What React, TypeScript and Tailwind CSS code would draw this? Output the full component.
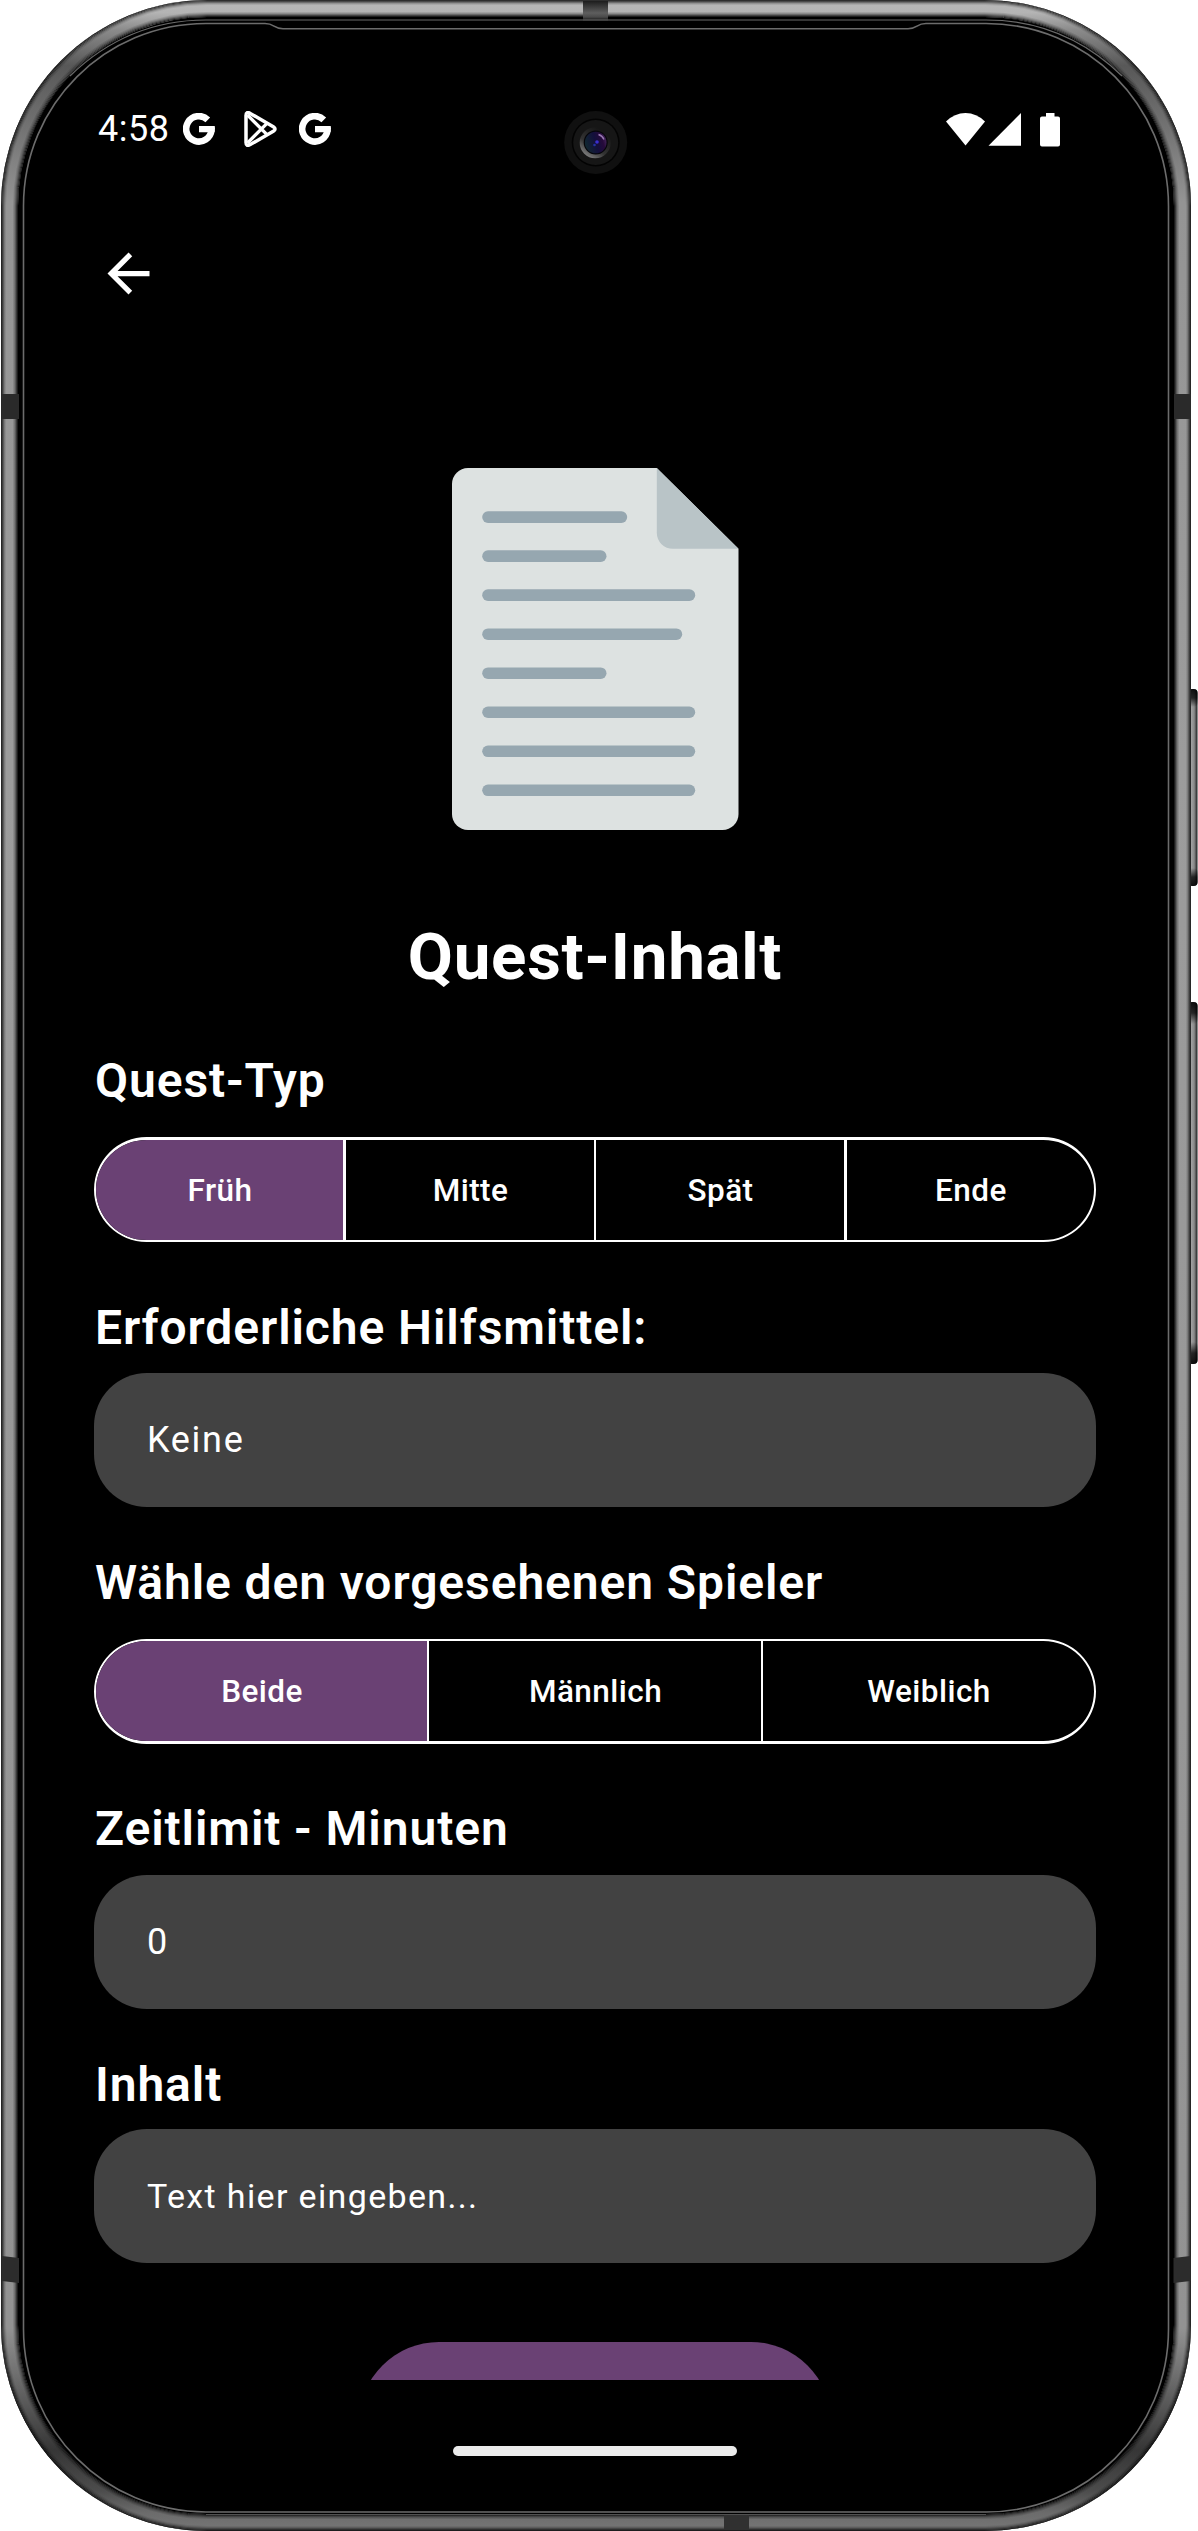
import type { ReactNode } from "react";

/* Concentric edge shading of the metal rim: [inset, width, colour, opacity] */
const RIM: [number, number, string, number][] = [
  [0, 1, "#000", 0.75],
  [1, 1, "#000", 0.6],
  [2, 1, "#000", 0.4],
  [3, 1, "#000", 0.2],
  [4, 1, "#000", 0.08],
  [12, 1, "#000", 0.1],
  [13, 1, "#000", 0.22],
  [14, 1, "#000", 0.4],
  [15, 1, "#000", 0.62],
  [16, 1, "#000", 0.82],
];

function ring(inset: number, width: number) {
  const o = inset + width / 2;
  return { x: 1 + o, y: o, width: 1190 - 2 * o, height: 2531 - 2 * o, rx: 206 - o };
}

function PhoneBody() {
  return (
    <svg className="absolute inset-0 h-full w-full" viewBox="0 0 1198 2531" aria-hidden="true">
      <defs>
        <linearGradient id="metal" gradientUnits="userSpaceOnUse" x1="0" y1="0" x2="0" y2="2531">
          <stop offset="0" stopColor="#b8b8b8" />
          <stop offset="0.005" stopColor="#b4b4b4" />
          <stop offset="0.012" stopColor="#8a8a8a" />
          <stop offset="0.026" stopColor="#585858" />
          <stop offset="0.05" stopColor="#727272" />
          <stop offset="0.08" stopColor="#949494" />
          <stop offset="0.3" stopColor="#9c9c9c" />
          <stop offset="0.92" stopColor="#929292" />
          <stop offset="0.95" stopColor="#585858" />
          <stop offset="0.968" stopColor="#363636" />
          <stop offset="0.984" stopColor="#4c4c4c" />
          <stop offset="0.993" stopColor="#6c6c6c" />
          <stop offset="1" stopColor="#767676" />
        </linearGradient>
        <linearGradient id="side-button" x1="0" y1="0" x2="1" y2="0">
          <stop offset="0" stopColor="#6a6a6a" />
          <stop offset="0.35" stopColor="#a0a0a0" />
          <stop offset="0.65" stopColor="#8a8a8a" />
          <stop offset="1" stopColor="#1c1c1c" />
        </linearGradient>
        <linearGradient id="band-top" x1="0" y1="0" x2="0" y2="1">
          <stop offset="0" stopColor="#1c1c1c" />
          <stop offset="0.6" stopColor="#5e5e5e" />
          <stop offset="0.8" stopColor="#4a4a4a" />
          <stop offset="1" stopColor="#0a0a0a" />
        </linearGradient>
        <linearGradient id="button-ends" x1="0" y1="0" x2="0" y2="1">
          <stop offset="0" stopColor="#000" stopOpacity="0.9" />
          <stop offset="0.5" stopColor="#000" stopOpacity="0.75" />
          <stop offset="1" stopColor="#000" stopOpacity="0" />
        </linearGradient>
      </defs>

      <rect x="1188" y="689" width="9.5" height="197" rx="4" fill="url(#side-button)" />
      <rect x="1188" y="689" width="9.5" height="18" rx="4" fill="url(#button-ends)" />
      <rect x="1188" y="868" width="9.5" height="18" rx="4" fill="url(#button-ends)" transform="rotate(180 1192.75 877)" />
      <rect x="1188" y="1002" width="9.5" height="362" rx="4" fill="url(#side-button)" />
      <rect x="1188" y="1002" width="9.5" height="22" rx="4" fill="url(#button-ends)" />
      <rect x="1188" y="1342" width="9.5" height="22" rx="4" fill="url(#button-ends)" transform="rotate(180 1192.75 1353)" />

      <rect x="1" y="0" width="1190" height="2531" rx="206" fill="#000" />
      <rect {...ring(0, 17)} fill="none" stroke="url(#metal)" strokeWidth="17" />
      {RIM.map(([inset, width, colour, opacity]) => (
        <rect key={inset} {...ring(inset, width)} fill="none" stroke={colour} strokeOpacity={opacity} strokeWidth={width} />
      ))}

      {/* antenna bands */}
      <rect x="583" y="1" width="25" height="20" fill="url(#band-top)" />
      <rect x="724" y="2514" width="25" height="16" fill="#303030" />
      <rect x="2" y="394" width="17" height="25" fill="#2a2a2a" />
      <rect x="1174" y="394" width="17" height="25" fill="#2a2a2a" />
      <path d="M2 2256L19 2258V2283L2 2281Z" fill="#2c2c2c" />
      <path d="M1190.500 2256L1173.500 2258V2283L1190.500 2281Z" fill="#2c2c2c" />

      {/* hairlines along the glass */}
      <path
        d="M70 76C105 42 150 20 206 20H986C1042 20 1087 42 1122 76"
        fill="none"
        stroke="#6a6a6a"
        strokeWidth="1.200"
      />
      <path
        d="M265 23.500H206C105 23.500 23.500 105 23.500 206V2329C23.500 2430 105 2512 206 2512H986C1087 2512 1168.500 2430 1168.500 2329V206C1168.500 105 1087 23.500 986 23.500H926C916 23.500 918 28.700 908 28.700H283C273 28.700 275 23.500 265 23.500Z"
        fill="none"
        stroke="#6c6c6c"
        strokeWidth="1.600"
      />
      <path d="M206 2514.500H986" stroke="#505050" strokeWidth="1" />
    </svg>
  );
}

function Camera() {
  return (
    <svg className="absolute left-[564px] top-[110px] h-[64px] w-[64px]" viewBox="0 0 64 64" aria-hidden="true">
      <defs>
        <linearGradient id="barrel" x1="0.15" y1="0.9" x2="0.7" y2="0.1">
          <stop offset="0" stopColor="#808080" />
          <stop offset="0.4" stopColor="#333333" />
          <stop offset="1" stopColor="#161616" />
        </linearGradient>
        <linearGradient id="glass" x1="0" y1="0.6" x2="1" y2="0.3">
          <stop offset="0" stopColor="#102830" />
          <stop offset="0.5" stopColor="#130f3c" />
          <stop offset="0.8" stopColor="#260a3a" />
          <stop offset="1" stopColor="#4a2860" />
        </linearGradient>
      </defs>
      <circle cx="31.700" cy="32.500" r="31.500" fill="#101010" />
      <circle cx="31.700" cy="32.500" r="24" fill="#030303" />
      <circle cx="31.700" cy="32.500" r="22.500" fill="#161616" />
      <circle cx="31.200" cy="32.800" r="15.500" fill="url(#barrel)" />
      <circle cx="31.700" cy="32.500" r="12" fill="#05050a" />
      <circle cx="31.700" cy="32.500" r="10.800" fill="url(#glass)" />
      <circle cx="33" cy="32" r="1.800" fill="#3a2fd0" />
      <circle cx="30.500" cy="35" r="1.300" fill="#2430a0" />
      <path d="M34.500 24.500a9 9 0 0 1 5.500 5" stroke="#9a7ab4" strokeWidth="1.400" fill="none" />
    </svg>
  );
}

function GoogleIcon() {
  return (
    <svg className="h-8 w-8" viewBox="0 0 32 32" aria-hidden="true">
      <path d="M24.800 6.800A12.700 12.700 0 1 0 28.500 17" fill="none" stroke="#fff" strokeWidth="6.600" />
      <path d="M16 12.900H31.700Q32.300 16 31.500 19.300H16Z" fill="#fff" />
    </svg>
  );
}

function PlayIcon() {
  return (
    <svg className="h-9 w-[33px]" viewBox="0 0 33 36" fill="none" stroke="#fff" aria-hidden="true">
      <path d="M2 4.500V31.500Q2 36 6.200 33.600L29.300 20.300Q32.800 18 29.300 15.700L6.200 2.400Q2 0 2 4.500Z" strokeWidth="3.500" strokeLinejoin="round" />
      <path d="M3.500 4L23.500 24.200M3.500 32L23.500 11.800" strokeWidth="3.300" />
    </svg>
  );
}

function StatusBar() {
  return (
    <div className="flex h-9 items-center justify-between pl-[98px] pr-[130px]">
      <div className="flex items-center">
        <span className="w-[84.500px] text-[36px] leading-[36px] tracking-[0.5px]">4:58</span>
        <GoogleIcon />
        <span className="ml-[29px] mr-[22px] flex">
          <PlayIcon />
        </span>
        <GoogleIcon />
      </div>
      <svg className="h-[36px] w-[114px]" viewBox="0 0 114 36" fill="#fff" aria-hidden="true">
        <path d="M0 10.500Q8.500 2 19.500 2T39 10.500L19.500 34.500Z" />
        <path d="M75 2V34.800H42.500Z" />
        <path d="M100 2h8.500v3.500h3.500a2 2 0 0 1 2 2v26a2 2 0 0 1-2 2h-16a2 2 0 0 1-2-2v-26a2 2 0 0 1 2-2h4Z" />
      </svg>
    </div>
  );
}

function DocumentIcon() {
  const lines = [145, 124.300, 213, 200, 124.300, 213, 213, 213];
  return (
    <svg className="mx-auto h-[362px] w-[287px] shrink-0" viewBox="0 0 287 362" aria-hidden="true">
      <path d="M16 0H204.800L286.500 80.800V346a16 16 0 0 1-16 16H16a16 16 0 0 1-16-16V16A16 16 0 0 1 16 0Z" fill="#dde2e1" />
      <path d="M204.800 0L286.500 80.800H221a16 16 0 0 1-16.200-16Z" fill="#b9c4c7" />
      {lines.map((w, i) => (
        <rect key={i} x="30.200" y={43.300 + i * 39.030} width={w} height="11.600" rx="5.800" fill="#96a7b0" />
      ))}
    </svg>
  );
}

function Label({ children }: { children: ReactNode }) {
  return <h2 className="h-14 whitespace-nowrap pl-px text-[48px] font-semibold leading-[56px] tracking-[0.9px]">{children}</h2>;
}

function Field({ children }: { children: ReactNode }) {
  return <div className="flex h-[134px] items-center rounded-[53px] bg-[#424242] pl-[53px]">{children}</div>;
}

const segmentText = "flex items-center justify-center pl-px pt-0.5 text-[31.5px] font-medium tracking-[0.45px]";

export default function App() {
  return (
    <div className="relative h-[2531px] w-[1198px] overflow-hidden bg-white font-['Roboto',sans-serif] text-white">
      <PhoneBody />
      <Camera />
      <div className="relative flex h-[2531px] w-[1190px] flex-col pt-[111px]">
        <StatusBar />
        <svg className="ml-[97px] mt-[95px] h-[63px] w-[63px]" viewBox="0 0 24 24" fill="#fff" aria-hidden="true">
          <path d="M20 11H7.830l5.590-5.590L12 4l-8 8 8 8 1.410-1.410L7.830 13H20v-2z" />
        </svg>

        <main className="ml-[94px] mt-[162.500px] flex h-[1912.500px] w-[1002px] flex-col overflow-hidden">
          <DocumentIcon />
          <h1 className="mt-[87.500px] h-20 text-center text-[65.5px] font-bold leading-[80px] tracking-[0.7px]">Quest-Inhalt</h1>

          <div className="mt-14">
            <Label>Quest-Typ</Label>
          </div>
          <div className="mt-7 grid h-[105px] shrink-0 grid-cols-[250px_250px_251px_1fr] overflow-hidden rounded-[53px] border-x-2 border-b-2 border-t-[3px] border-white">
            <div className={`${segmentText} border-r-[3px] bg-[#6a4174]`}>Früh</div>
            <div className={`${segmentText} border-r-2`}>Mitte</div>
            <div className={`${segmentText} border-r-[3px]`}>Spät</div>
            <div className={segmentText}>Ende</div>
          </div>

          <div className="mt-[58px]">
            <Label>Erforderliche Hilfsmittel:</Label>
          </div>
          <div className="mt-[17px]">
            <Field>
              <span className="text-[36px] tracking-[1.7px]">Keine</span>
            </Field>
          </div>

          <div className="mt-12">
            <Label>Wähle den vorgesehenen Spieler</Label>
          </div>
          <div className="mt-7 grid h-[105px] shrink-0 grid-cols-[333px_334px_1fr] overflow-hidden rounded-[53px] border-x-2 border-b-[3px] border-t-2 border-white">
            <div className={`${segmentText} border-r-2 bg-[#6a4174]`}>Beide</div>
            <div className={`${segmentText} border-r-2`}>Männlich</div>
            <div className={segmentText}>Weiblich</div>
          </div>

          <div className="mt-[57px]">
            <Label>Zeitlimit - Minuten</Label>
          </div>
          <div className="mt-[18px]">
            <Field>
              <span className="text-[36px]">0</span>
            </Field>
          </div>

          <div className="mt-12">
            <Label>Inhalt</Label>
          </div>
          <div className="mt-4">
            <Field>
              <span className="text-[34px] tracking-[1.35px]">Text hier eingeben...</span>
            </Field>
          </div>

          <div className="mx-auto mt-[79px] h-[160px] w-[472px] shrink-0 rounded-[80px] bg-[#6a4174]" />
        </main>

        <div className="ml-[453px] mt-[66px] h-[10px] w-[284px] rounded-full bg-[#ebebeb]" />
      </div>
    </div>
  );
}
